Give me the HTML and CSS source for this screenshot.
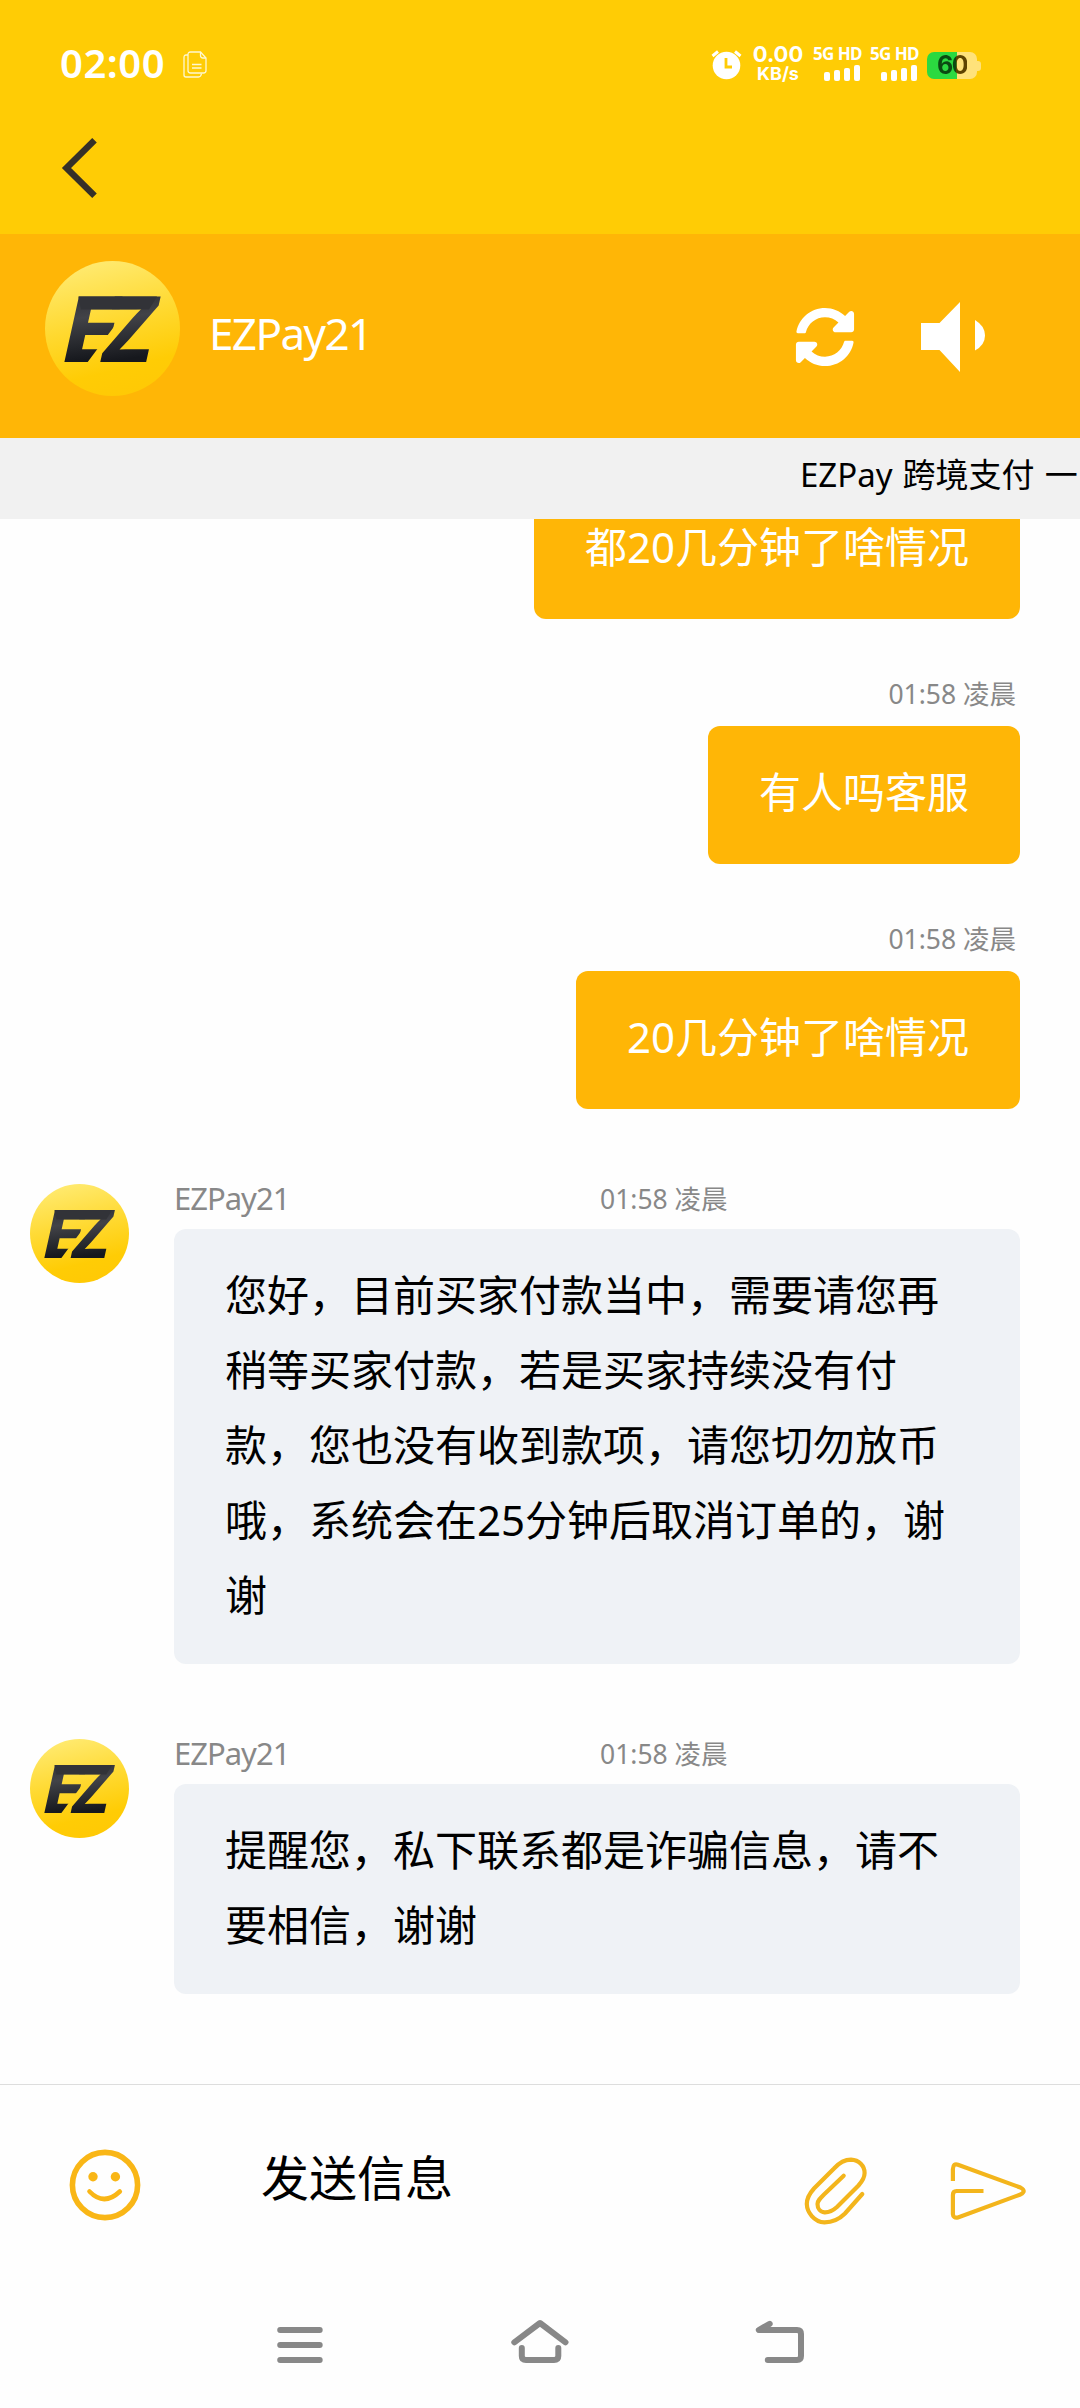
FILE: index.html
```html
<!DOCTYPE html>
<html lang="zh-CN">
<head>
<meta charset="utf-8">
<title>EZPay21</title>
<link rel="stylesheet" href="styles.css">
</head>
<body>
<svg class="defs" width="0" height="0" aria-hidden="true">
  <defs>
    <linearGradient id="coin" x1="0.35" y1="0" x2="0.6" y2="1">
      <stop offset="0" stop-color="#ffea70"/>
      <stop offset="0.45" stop-color="#ffd930"/>
      <stop offset="0.8" stop-color="#ffcc05"/>
      <stop offset="1" stop-color="#ffc905"/>
    </linearGradient>
    <linearGradient id="steel" gradientUnits="userSpaceOnUse" x1="0" y1="-66" x2="8" y2="0">
      <stop offset="0" stop-color="#303136"/>
      <stop offset="0.35" stop-color="#424348"/>
      <stop offset="1" stop-color="#16181d"/>
    </linearGradient>
    <clipPath id="e-cut">
      <path d="M10 30H100L88 49.5L81 49.4L39 106H10Z"/>
    </clipPath>
    <symbol id="logo" viewBox="0 0 135 135">
      <circle cx="67.5" cy="67.5" r="67.5" fill="url(#coin)"/>
      <g clip-path="url(#e-cut)">
        <text class="mark" transform="translate(14.500 101) skewX(-12.5) scale(0.96 1)" x="0" y="0">E</text>
      </g>
      <text class="mark" transform="translate(51 101) skewX(-12.5) scale(0.89 1)" x="0" y="0">Z</text>
      <path d="M33.400 35.400H112L104 48.500H36Z" fill="#323338"/>
    </symbol>
  </defs>
</svg>

<div class="screen">
  <div class="top">
    <div class="status">
      <span class="clock">02:00</span>
      <svg class="doc" width="24" height="27" viewBox="0 0 24 27" fill="none" stroke="#fff8d0" stroke-width="1.3">
        <path d="M7.5 1H17.5L23 7V19.5Q23 22 20.5 22H7.5Q5 22 5 19.5V3.5Q5 1 7.5 1Z"/>
        <path d="M17.5 1V4.5Q17.5 7 20 7H23"/>
        <path d="M5 4H3Q1 4 1 6.5V24Q1 26 3 26H15.500Q18 26 18.500 22.500"/>
        <path d="M9 13.500H18.500M9 17H18.500"/>
      </svg>
      <div class="status-right">
        <svg class="alarm" width="31" height="30" viewBox="0 0 31 30">
          <circle cx="15.500" cy="15.500" r="13.800" fill="#fff"/>
          <path d="M1.500 6L7 1.500M29.500 6L24 1.500" stroke="#fff" stroke-width="3" />
          <path d="M15 8V17H21" stroke="#ffcc05" stroke-width="2.800" fill="none"/>
        </svg>
        <div class="speed"><span class="speed-n">0.00</span><span class="speed-u">KB/s</span></div>
        <div class="sim sim-a">
          <span>5G HD</span>
          <div class="bars"><i class="b1"></i><i class="b2"></i><i class="b3"></i><i class="b4"></i></div>
        </div>
        <div class="sim">
          <span>5G HD</span>
          <div class="bars"><i class="b1"></i><i class="b2"></i><i class="b3"></i><i class="b4"></i></div>
        </div>
        <div class="battery"><div class="cell"><span>60</span></div><i class="nub"></i></div>
      </div>
    </div>
    <svg class="back" width="36" height="60" viewBox="0 0 36 60" fill="none" stroke="#363028" stroke-width="6.500">
      <path d="M33.500 2.300L5.500 30L33.500 57.700"/>
    </svg>
  </div>

  <header class="head">
    <svg class="avatar-lg" viewBox="0 0 135 135"><use href="#logo"/></svg>
    <h1 class="title">EZPay21</h1>
    <svg class="refresh" width="60" height="60" viewBox="0 0 512 512" fill="#fff">
      <path d="M370.720 133.280C339.458 104.008 298.888 87.962 255.848 88c-77.458.068-144.328 53.178-162.791 126.850-1.344 5.363-6.122 9.150-11.651 9.150H24.103c-7.498 0-13.194-6.807-11.807-14.176C33.933 94.924 134.813 8 256 8c66.448 0 126.791 26.136 171.315 68.685L463.030 40.970C478.149 25.851 504 36.559 504 57.941V192c0 13.255-10.745 24-24 24H345.941c-21.382 0-32.090-25.851-16.971-40.971l41.750-41.749zM32 296h134.059c21.382 0 32.090 25.851 16.971 40.971l-41.750 41.750c31.262 29.273 71.835 45.319 114.876 45.280 77.418-.070 144.315-53.144 162.787-126.849 1.344-5.363 6.122-9.150 11.651-9.150h57.304c7.498 0 13.194 6.807 11.807 14.176C478.067 417.076 377.187 504 256 504c-66.448 0-126.791-26.136-171.315-68.685L48.970 471.030C33.851 486.149 8 475.441 8 454.059V320c0-13.255 10.745-24 24-24z"/>
    </svg>
    <svg class="speaker" width="64" height="70" viewBox="0 0 64 70" fill="#fff">
      <path d="M0 21H18.500L39 0V70L18.500 48H0Z"/>
      <path d="M54 18Q64 24 64 33.500T54 48.500Z"/>
    </svg>
  </header>

  <div class="notice"><span>EZPay 跨境支付 一</span></div>

  <main class="chat">
    <div class="out first"><div class="bubble mine">都20几分钟了啥情况</div></div>
    <div class="out"><time>01:58 凌晨</time><div class="bubble mine">有人吗客服</div></div>
    <div class="out"><time>01:58 凌晨</time><div class="bubble mine">20几分钟了啥情况</div></div>
    <div class="in">
      <svg class="avatar" viewBox="0 0 135 135"><use href="#logo"/></svg>
      <div class="body">
        <div class="meta"><span class="name">EZPay21</span><time>01:58 凌晨</time></div>
        <div class="bubble theirs">您好，目前买家付款当中，需要请您再稍等买家付款，若是买家持续没有付款，您也没有收到款项，请您切勿放币哦，系统会在25分钟后取消订单的，谢谢</div>
      </div>
    </div>
    <div class="in">
      <svg class="avatar" viewBox="0 0 135 135"><use href="#logo"/></svg>
      <div class="body">
        <div class="meta"><span class="name">EZPay21</span><time>01:58 凌晨</time></div>
        <div class="bubble theirs">提醒您，私下联系都是诈骗信息，请不要相信，谢谢</div>
      </div>
    </div>
  </main>

  <div class="composer">
    <svg class="smile" width="72" height="72" viewBox="0 0 72 72" fill="none" stroke="#f9b616">
      <circle cx="36" cy="36" r="32.600" stroke-width="5.600"/>
      <circle cx="24" cy="27.800" r="4.700" fill="#f9b616" stroke="none"/>
      <circle cx="46.400" cy="27.800" r="4.700" fill="#f9b616" stroke="none"/>
      <path d="M20.500 42.500Q35 57.500 50.800 42.500" stroke-width="4.600" stroke-linecap="round"/>
    </svg>
    <span class="prompt">发送信息</span>
    <svg class="clip" width="64" height="68" viewBox="804 2157 64 68" fill="none" stroke="#f3b51c" stroke-width="4.200" stroke-linecap="round">
      <path d="M862.300 2194L845 2213.500C838 2220.500 831.500 2222.300 824.500 2222.300C814 2222 807 2212 806.800 2204C806.800 2198 809.500 2193.500 814 2188.500L834 2168.500C840 2162 845.500 2159.700 851 2159.700C859 2160 864.600 2166 864.600 2173C864.600 2178 862.500 2181 858.500 2185.500L837 2207C832.500 2211 829 2212.500 824.500 2212.300C820 2212 817.500 2208 817.500 2204C817.500 2201 820 2198.500 824 2194.500L843.700 2175.700"/>
    </svg>
    <svg class="send" width="78" height="60" viewBox="949 2161 78 60" fill="none" stroke="#f3b51c" stroke-width="4.200">
      <path d="M952.900 2181V2169Q953.200 2163 958 2164.700L1020.400 2187.500Q1027 2191 1020.400 2194.500L958 2217.500Q953.200 2218.500 952.900 2214V2195Q952.900 2191 956.500 2191H983.500"/>
    </svg>
  </div>

  <nav class="nav">
    <svg width="54" height="46" viewBox="273 2319 54 46" fill="none" stroke="#888" stroke-width="6" stroke-linecap="round">
      <path d="M280.200 2330H319.700M280.200 2345H319.700M280.200 2360H319.700"/>
    </svg>
    <svg width="60" height="46" viewBox="510 2319 60 46" fill="none" stroke="#888" stroke-width="6" stroke-linecap="round" stroke-linejoin="round">
      <path d="M514.300 2342.300L540 2323L565.500 2342.300M521.800 2348V2356Q521.800 2360 526 2360H554Q558.300 2360 558.300 2356V2348"/>
    </svg>
    <svg width="54" height="46" viewBox="753 2319 54 46" fill="none" stroke="#888" stroke-width="6" stroke-linecap="round" stroke-linejoin="round">
      <path d="M769.700 2323.800L758.800 2330H797Q801 2330 801 2334V2356Q801 2360 797 2360H767.800"/>
    </svg>
  </nav>
</div>
</body>
</html>
```

FILE: styles.css
```css
* { box-sizing: border-box; }
html, body { margin: 0; padding: 0; }
body {
  background: #fff;
  font-family: "Noto Sans", "Noto Sans CJK SC", sans-serif;
  color: #000;
}
svg { display: block; flex: none; }
.defs { position: absolute; }
.mark {
  font-family: Inter, "Liberation Sans", sans-serif;
  font-weight: 800;
  font-size: 90px;
  fill: url(#steel);
}
.screen {
  width: 1080px;
  height: 2408px;
  display: flex;
  flex-direction: column;
  overflow: hidden;
  background: #fefefe;
}

/* status bar and back button */
.top { height: 234px; flex: none; background: #ffcc05; }
.status {
  height: 128px;
  padding: 0 99px 0 60px;
  display: flex;
  align-items: center;
  color: #fff;
}
.clock { font-size: 40px; font-weight: 600; line-height: 44px; letter-spacing: 0.5px; width: 123px; margin-top: -2px; }
.status-right { margin-left: auto; display: flex; align-items: center; height: 40px; }
.alarm { margin-top: 2px; }
.speed {
  width: 60px;
  margin: -2px 0 0 6px;
  display: flex;
  flex-direction: column;
  align-items: center;
  font-family: Inter, "Noto Sans", sans-serif;
  font-weight: 700;
}
.speed-n { font-size: 22px; line-height: 20px; letter-spacing: 0; }
.speed-u { font-size: 18px; line-height: 19px; letter-spacing: 0; }
.sim { width: 57px; height: 37px; font-size: 17px; font-weight: 700; line-height: 16px; white-space: nowrap; }
.sim-a { margin-left: 5px; }
.sim span { display: block; letter-spacing: -0.6px; }
.bars { display: flex; gap: 4px; align-items: flex-end; height: 19px; padding-left: 11px; }
.bars i { width: 6px; background: #fff; border-radius: 2px; }
.b1 { height: 9px; }
.b2 { height: 11px; }
.b3 { height: 13px; }
.b4 { height: 16px; }
.battery { display: flex; align-items: center; margin: 3px 0 0 0; }
.cell {
  width: 50px;
  height: 27px;
  border-radius: 7px;
  background: linear-gradient(90deg, #2bd940 60%, #ffe27a 60%);
  display: flex;
  align-items: center;
  justify-content: center;
}
.cell span {
  font: 700 25px/27px Inter, sans-serif;
  letter-spacing: -1.5px;
  background: linear-gradient(90deg, #0b4a12 65%, #5e4300 65%);
  -webkit-background-clip: text;
  background-clip: text;
  color: transparent;
}
.nub { width: 4px; height: 10px; border-radius: 0 3px 3px 0; background: #ffe27a; }
.back { margin: 10px 0 0 61px; }

/* agent header */
.head {
  height: 204px;
  flex: none;
  background: #ffb606;
  display: flex;
  align-items: center;
  padding: 0 95px 0 45px;
}
.avatar-lg { width: 135px; height: 135px; margin-bottom: 16px; }
.title {
  margin: -6px 0 0 29px;
  color: #fff;
  font-size: 44px;
  font-weight: 400;
  line-height: 60px;
  letter-spacing: -1.600px;
}
.refresh { margin-left: auto; margin-top: 2px; }
.speaker { margin-left: 66px; margin-top: 2px; }

.notice {
  height: 81px;
  flex: none;
  background: #f1f1f1;
  padding: 12px 0 0 800px;
  font-size: 33px;
  line-height: 50px;
  word-spacing: 1.500px;
  white-space: nowrap;
  overflow: hidden;
}

/* conversation */
.chat { height: 1565px; flex: none; overflow: hidden; padding-right: 60px; }
.out { display: flex; flex-direction: column; align-items: flex-end; margin-top: 60px; }
.out.first { margin-top: -38px; }
time { font-size: 26.500px; line-height: 31px; color: #888; white-space: nowrap; }
.out time { height: 47px; padding-right: 4px; }
.bubble { border-radius: 12px; font-size: 42px; line-height: 75px; }
.mine { background: #ffb606; color: #fff; height: 138px; padding: 28px 51px 0; white-space: nowrap; }
.in { display: flex; margin-top: 75px; padding-left: 30px; }
.avatar { width: 99px; height: 99px; margin-right: 45px; }
.body { width: 846px; flex: none; }
.meta { height: 45px; display: flex; }
.name { width: 426px; font-size: 31px; line-height: 28px; color: #888; letter-spacing: -1px; }
.theirs { background: #eff2f6; padding: 28px 51px 32px; }

/* message input */
.composer {
  height: 200px;
  flex: none;
  border-top: 1px solid #ddd;
  display: flex;
  align-items: center;
  padding: 0 53px 0 69px;
}
.prompt { font-size: 48px; line-height: 70px; margin: -14px 0 0 120px; }
.clip { margin-left: auto; margin-top: 13px; }
.send { margin-left: 81px; margin-top: 13px; }

/* system navigation */
.nav {
  height: 124px;
  display: flex;
  justify-content: space-between;
  padding: 35px 273px 0;
}
```
